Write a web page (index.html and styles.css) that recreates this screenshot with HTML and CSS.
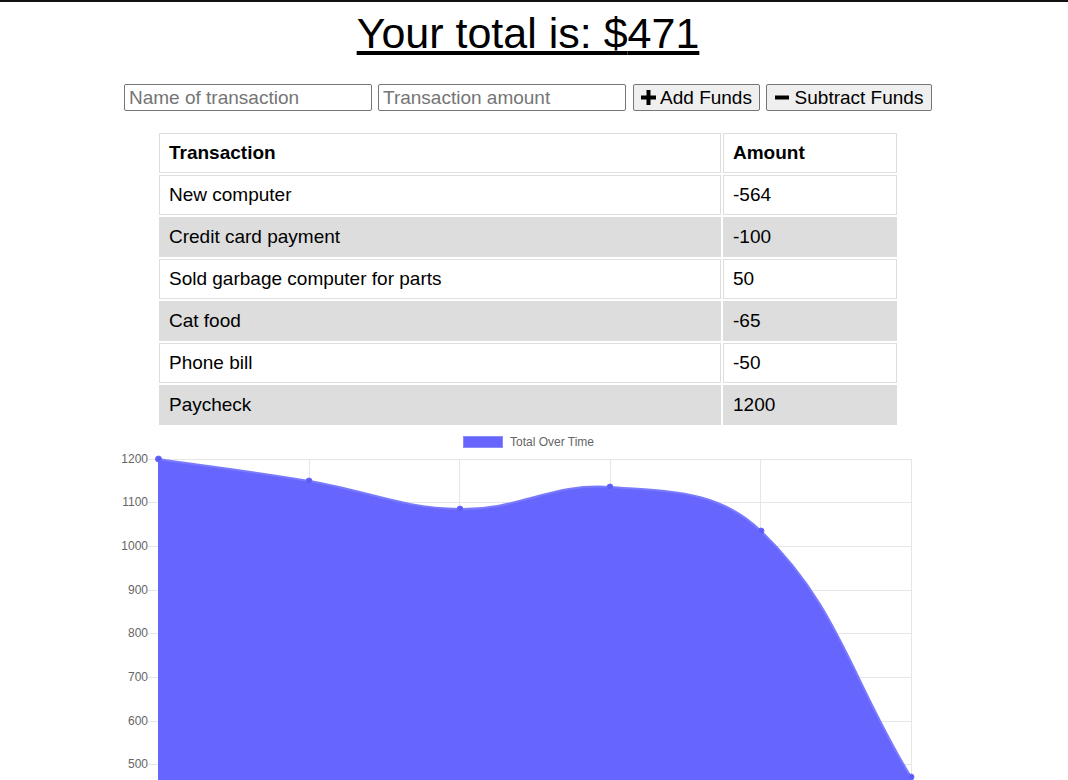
FILE: index.html
```html
<!DOCTYPE html>
<html lang="en">
<head>
<meta charset="utf-8">
<title>Budget Tracker</title>
<link rel="stylesheet" href="styles.css">
</head>
<body>
<div class="page">
  <h1 class="total">Your total is: $<span>471</span></h1>

  <div class="form">
    <input class="field" type="text" placeholder="Name of transaction">
    <input class="field" type="number" placeholder="Transaction amount">
    <button class="btn btn-add" type="button">
      <svg class="icon" width="15" height="15" viewBox="0 0 15 15"><path d="M5.5 0h4v5.5H15v4H9.5V15h-4V9.5H0v-4h5.5z" fill="#000"/></svg>
      <span>Add Funds</span>
    </button>
    <button class="btn btn-sub" type="button">
      <svg class="icon" width="14" height="15" viewBox="0 0 14 15"><rect x="0" y="5.5" width="14" height="4" fill="#000"/></svg>
      <span>Subtract Funds</span>
    </button>
  </div>

  <table class="tx">
    <thead>
      <tr><th class="c-name">Transaction</th><th class="c-amt">Amount</th></tr>
    </thead>
    <tbody>
      <tr><td>New computer</td><td>-564</td></tr>
      <tr><td>Credit card payment</td><td>-100</td></tr>
      <tr><td>Sold garbage computer for parts</td><td>50</td></tr>
      <tr><td>Cat food</td><td>-65</td></tr>
      <tr><td>Phone bill</td><td>-50</td></tr>
      <tr><td>Paycheck</td><td>1200</td></tr>
    </tbody>
  </table>

  <div class="chart">
    <svg class="chart-svg" width="1056" height="353" viewBox="0 427 1056 353">
      <g class="legend">
        <rect x="463.5" y="436.5" width="39" height="11" fill="#6666ff" stroke="#8c8cff" stroke-width="1"/>
        <text x="510" y="446" class="legend-text">Total Over Time</text>
      </g>
      <g class="grid" stroke="#e6e6e6" stroke-width="1">
        <line x1="148" y1="459.5" x2="911.5" y2="459.5"/>
        <line x1="148" y1="502.5" x2="911.5" y2="502.5"/>
        <line x1="148" y1="546.5" x2="911.5" y2="546.5"/>
        <line x1="148" y1="590.5" x2="911.5" y2="590.5"/>
        <line x1="148" y1="633.5" x2="911.5" y2="633.5"/>
        <line x1="148" y1="677.5" x2="911.5" y2="677.5"/>
        <line x1="148" y1="721.5" x2="911.5" y2="721.5"/>
        <line x1="148" y1="764.5" x2="911.5" y2="764.5"/>
        <line x1="158.5" y1="459" x2="158.5" y2="780"/>
        <line x1="309.5" y1="459" x2="309.5" y2="780"/>
        <line x1="459.5" y1="459" x2="459.5" y2="780"/>
        <line x1="610.5" y1="459" x2="610.5" y2="780"/>
        <line x1="760.5" y1="459" x2="760.5" y2="780"/>
        <line x1="911.5" y1="459" x2="911.5" y2="780"/>
      </g>
      <g class="ticks">
        <text x="148" y="462.5">1200</text>
        <text x="148" y="506">1100</text>
        <text x="148" y="550">1000</text>
        <text x="148" y="594">900</text>
        <text x="148" y="637">800</text>
        <text x="148" y="681">700</text>
        <text x="148" y="725">600</text>
        <text x="148" y="768">500</text>
      </g>
      <path class="area" d="M158,459 C218.4,467.8 248.8,471 309,481 C369.6,491 399.4,507.8 460,509 C519.8,510.2 550.9,482.7 610,487 C671.3,491.5 718.5,490 761,531 C838.9,606 851,678.6 911,777 L911,809 L158,809 Z"/>
      <path class="line" d="M158,459 C218.4,467.8 248.8,471 309,481 C369.6,491 399.4,507.8 460,509 C519.8,510.2 550.9,482.7 610,487 C671.3,491.5 718.5,490 761,531 C838.9,606 851,678.6 911,777"/>
      <g class="points">
        <circle cx="158.5" cy="459" r="3"/>
        <circle cx="309" cy="481" r="3"/>
        <circle cx="460" cy="509" r="3"/>
        <circle cx="610" cy="487" r="3"/>
        <circle cx="761" cy="531" r="3"/>
        <circle cx="911" cy="777" r="3"/>
      </g>
    </svg>
  </div>
</div>
</body>
</html>
```

FILE: styles.css
```css
html {
  overflow: hidden;
}

body {
  margin: 0;
  border-top: 2px solid #111;
  background: #fff;
  color: #000;
  font-family: "Liberation Sans", Arial, sans-serif;
}

.page {
  width: 1056px;
}

.total {
  margin: 7px 0 0;
  font-size: 43px;
  line-height: 48px;
  font-weight: normal;
  text-align: center;
  text-decoration: underline;
}

.form {
  display: flex;
  justify-content: center;
  margin-top: 27px;
  height: 27px;
}

.field {
  box-sizing: border-box;
  width: 248px;
  height: 27px;
  margin: 0 6px 0 0;
  padding: 0 4px;
  border: 1px solid #767676;
  border-radius: 2px;
  font-family: "Liberation Sans", Arial, sans-serif;
  font-size: 19px;
  color: #000;
  background: #fff;
}

.field:nth-child(2) {
  margin-right: 7px;
}

.field::placeholder {
  color: #757575;
}

.btn {
  box-sizing: border-box;
  display: flex;
  align-items: center;
  justify-content: center;
  gap: 4px;
  height: 27px;
  padding: 0;
  border: 1px solid #767676;
  border-radius: 2px;
  background: #efefef;
  color: #000;
  font-family: "Liberation Sans", Arial, sans-serif;
  font-size: 19px;
}

.btn-add {
  width: 127px;
  margin-right: 6px;
}

.btn-sub {
  width: 166px;
  gap: 6px;
}

.icon {
  display: block;
  flex: none;
}

.tx {
  margin: 20px auto 0;
  width: 742px;
  table-layout: fixed;
  border-collapse: separate;
  border-spacing: 2px;
  font-size: 19px;
}

.tx th,
.tx td {
  box-sizing: border-box;
  height: 40px;
  padding: 0 9px;
  border: 1px solid #dedede;
  text-align: left;
  line-height: 22px;
}

.tx th {
  font-weight: bold;
}

.c-name {
  width: 562px;
}

.c-amt {
  width: 174px;
}

.tx tbody tr:nth-child(even) td {
  background: #dddddd;
  border-color: #dddddd;
}

.chart {
  height: 353px;
}

.chart-svg {
  display: block;
}

.legend-text {
  font-family: "Liberation Sans", Arial, sans-serif;
  font-size: 12px;
  fill: #666;
}

.ticks text {
  font-family: "Liberation Sans", Arial, sans-serif;
  font-size: 12px;
  fill: #666;
  text-anchor: end;
}

.area {
  fill: #6666ff;
}

.line {
  fill: none;
  stroke: #7a7aff;
  stroke-width: 2;
}

.points circle {
  fill: #5c5cf5;
  stroke: #6a6aff;
  stroke-width: 1;
}
```
